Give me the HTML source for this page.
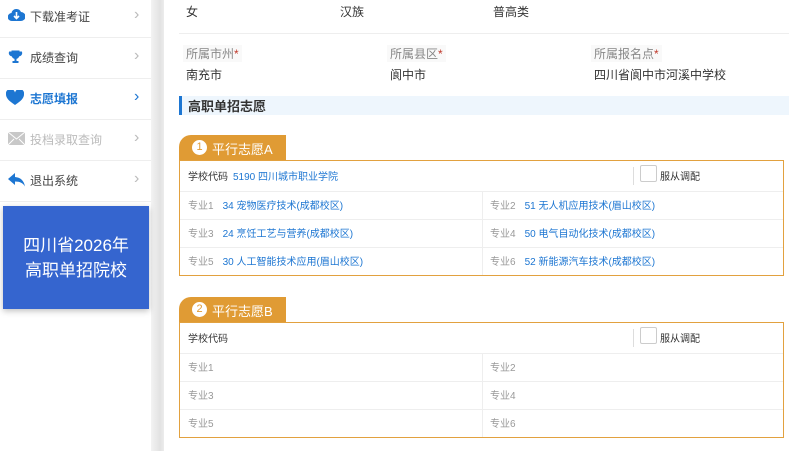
<!DOCTYPE html><html><head><meta charset="utf-8"><style>
*{margin:0;padding:0;box-sizing:border-box}
body{width:797px;height:451px;overflow:hidden;background:#fff;font-family:"Liberation Sans","Noto Sans CJK SC",sans-serif;position:relative;color:#333}
.abs{position:absolute}
.side{left:0;top:0;width:151px;height:451px;background:#fff}
.strip{left:151px;top:0;width:13px;height:451px;background:linear-gradient(90deg,#f3f3f3,#e2e2e2 70%,#ececec)}
.nav{left:0;width:151px;height:41px;border-bottom:1px solid #eee;font-size:12px;color:#444}
.nav span.t{position:absolute;left:30px;top:11px}
.nav .ar{position:absolute;left:134px;top:9px;color:#bbb;font-size:16px}
.ic{position:absolute;left:8px;top:12px}
.t12{font-size:12px}
.lbl{font-size:12px;color:#888;background:#f9f9f9;padding:0 3px}
.lbl b{color:#c0392b;font-weight:normal}
.box{left:179px;width:605px;border:1px solid #e2a13f}
.tab{left:179px;width:107px;height:25px;background:#e09b34;border-radius:12px 0 0 0;color:#fff;font-size:13px}
.tab i{position:absolute;left:13px;top:5px;width:15px;height:15px;border-radius:50%;background:#fff;color:#e09b34;font-style:normal;font-size:11px;text-align:center;line-height:15px}
.tab span{position:absolute;left:33px;top:4px}
.row{position:relative;height:28px;border-top:1px solid #eee;font-size:10px;color:#999}
.row .l,.row .r{position:absolute;top:5px}
.row .l{left:8px}.row .r{left:310px}
.row .mid{position:absolute;left:302px;top:0;height:100%;border-left:1px solid #eee}
.row a{color:#1d76d2;margin-left:9px}
.hd{height:30px;border-top:none;color:#333}
.hd .l{top:7px}
.cb{position:absolute;left:460px;top:4px;width:17px;height:17px;border:1px solid #ccc;border-radius:2px}
.sep{position:absolute;left:453px;top:6px;height:18px;border-left:1px solid #ddd}
.cbt{position:absolute;left:480px;top:7px;color:#333}
</style></head><body>
<div class="abs side"></div>
<div class="abs strip"></div>
<div class="abs nav" style="top:-3px"><svg class="ic" width="17" height="14" viewBox="0 0 17 14" style="top:11px"><path d="M4 13a4 4 0 0 1-.5-8A5 5 0 0 1 13 4a4 4 0 0 1 0 9z" fill="#1d76d2"/><path d="M8.5 4v6M6 8l2.5 2.5L11 8" stroke="#fff" stroke-width="1.6" fill="none"/></svg><span class="t">下载准考证</span><span class="ar">›</span></div>
<div class="abs nav" style="top:38px"><svg class="ic" width="15" height="15" viewBox="0 0 15 15"><path d="M4 1h7v4a3.5 3.5 0 0 1-7 0zM4 2H1.5a3 3 0 0 0 3 4M11 2h2.5a3 3 0 0 1-3 4" fill="#1d76d2" stroke="#1d76d2"/><path d="M6.5 8h2v3h2v2h-6v-2h2z" fill="#1d76d2"/></svg><span class="t">成绩查询</span><span class="ar">›</span></div>
<div class="abs nav" style="top:79px"><svg class="ic" width="18" height="16" viewBox="0 0 18 16" style="left:6px;top:11px"><path d="M9 15C3 11 0 8 0 4.5A4.3 4.3 0 0 1 9 2.5 4.3 4.3 0 0 1 18 4.5C18 8 15 11 9 15z" fill="#1d76d2"/></svg><span class="t" style="color:#1d76d2;font-weight:bold">志愿填报</span><span class="ar" style="color:#1d76d2">›</span></div>
<div class="abs nav" style="top:120px"><svg class="ic" width="17" height="13" viewBox="0 0 17 13"><rect width="17" height="13" fill="#c8c8c8"/><path d="M0 0l8.5 7L17 0M0 13l6-6M17 13l-6-6" stroke="#fff" fill="none"/></svg><span class="t" style="color:#bbb">投档录取查询</span><span class="ar">›</span></div>
<div class="abs nav" style="top:161px"><svg class="ic" width="17" height="14" viewBox="0 0 17 14"><path d="M7 0L0 6l7 6V8.5c5 0 8 1.5 10 5C16 8 13 4.5 7 4z" fill="#1d76d2"/></svg><span class="t">退出系统</span><span class="ar">›</span></div>
<div class="abs" style="left:3px;top:206px;width:146px;height:103px;background:#3565cf;box-shadow:0 2px 6px rgba(0,0,0,.25);color:#fff;font-size:17px;line-height:25px;text-align:center;padding-top:27px">四川省2026年<br>高职单招院校</div>

<div class="abs t12" style="left:186px;top:3px">女</div>
<div class="abs t12" style="left:340px;top:3px">汉族</div>
<div class="abs t12" style="left:493px;top:3px">普高类</div>
<div class="abs" style="left:179px;top:33px;width:610px;border-top:1px solid #eee"></div>
<div class="abs lbl" style="left:183px;top:45px">所属市州<b>*</b></div>
<div class="abs lbl" style="left:387px;top:45px">所属县区<b>*</b></div>
<div class="abs lbl" style="left:591px;top:45px">所属报名点<b>*</b></div>
<div class="abs t12" style="left:186px;top:66px">南充市</div>
<div class="abs t12" style="left:390px;top:66px">阆中市</div>
<div class="abs t12" style="left:594px;top:66px">四川省阆中市河溪中学校</div>
<div class="abs" style="left:179px;top:96px;width:610px;height:19px;background:#eef6fd;border-left:3px solid #1d76d2;font-size:13px;font-weight:bold;padding:0 0 0 6px">高职单招志愿</div>

<div class="abs tab" style="top:135px"><i>1</i><span>平行志愿A</span></div>
<div class="abs box" style="top:160px">
<div class="row hd"><span class="l">学校代码<a style="margin-left:5px">5190 四川城市职业学院</a></span><span class="sep"></span><span class="cb"></span><span class="cbt">服从调配</span></div>
<div class="row"><span class="l">专业1<a>34 宠物医疗技术(成都校区)</a></span><span class="mid"></span><span class="r">专业2<a>51 无人机应用技术(眉山校区)</a></span></div>
<div class="row"><span class="l">专业3<a>24 烹饪工艺与营养(成都校区)</a></span><span class="mid"></span><span class="r">专业4<a>50 电气自动化技术(成都校区)</a></span></div>
<div class="row"><span class="l">专业5<a>30 人工智能技术应用(眉山校区)</a></span><span class="mid"></span><span class="r">专业6<a>52 新能源汽车技术(成都校区)</a></span></div>
</div>

<div class="abs tab" style="top:297px"><i>2</i><span>平行志愿B</span></div>
<div class="abs box" style="top:322px">
<div class="row hd"><span class="l">学校代码</span><span class="sep"></span><span class="cb"></span><span class="cbt">服从调配</span></div>
<div class="row"><span class="l">专业1</span><span class="mid"></span><span class="r">专业2</span></div>
<div class="row"><span class="l">专业3</span><span class="mid"></span><span class="r">专业4</span></div>
<div class="row"><span class="l">专业5</span><span class="mid"></span><span class="r">专业6</span></div>
</div>
</body></html>
